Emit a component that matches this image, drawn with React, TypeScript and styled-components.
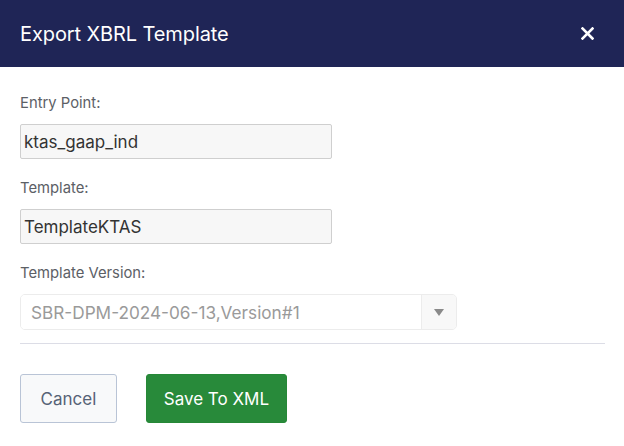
import React from "react";
import styled, { createGlobalStyle } from "styled-components";

const Global = createGlobalStyle`
  html, body { margin: 0; padding: 0; background: #ffffff; }
  body { font-family: Inter, "Noto Sans", sans-serif; }
  * { box-sizing: border-box; }
`;

const Dialog = styled.div`
  width: 624px;
  height: 446px;
  background: #ffffff;
  display: flex;
  flex-direction: column;
`;

const Header = styled.div`
  height: 67px;
  background: #1f2556;
  display: flex;
  align-items: center;
  justify-content: space-between;
  padding: 0 29px 0 20px;
`;

const Title = styled.h2`
  margin: 0;
  font-size: 20px;
  font-weight: 400;
  color: #ffffff;
  letter-spacing: -0.1px;
`;

const CloseButton = styled.button`
  border: 0;
  background: transparent;
  padding: 0;
  width: 16px;
  height: 16px;
  display: flex;
  align-items: center;
  justify-content: center;
  cursor: pointer;
`;

const Body = styled.div`
  padding: 26px 20px 0 20px;
  display: flex;
  flex-direction: column;
`;

const Field = styled.div<{ $last?: boolean }>`
  display: flex;
  flex-direction: column;
  margin-bottom: ${(p) => (p.$last ? "0" : "19px")};
`;

const Label = styled.label`
  font-size: 14.8px;
  line-height: 20px;
  color: #5c6066;
  margin-bottom: 11px;
`;

const TextInput = styled.input`
  width: 312px;
  height: 35px;
  border: 1px solid #cfcfcf;
  border-radius: 2px;
  background: #f7f7f7;
  padding: 0 3px;
  font-family: Inter, "Noto Sans", sans-serif;
  font-size: 17px;
  color: #333333;
  outline: none;
`;

const Select = styled.div`
  width: 437px;
  height: 36px;
  border: 1px solid #ececec;
  border-radius: 5px;
  display: flex;
  align-items: stretch;
  overflow: hidden;
`;

const SelectValue = styled.div`
  flex: 1;
  display: flex;
  align-items: center;
  padding-left: 10px;
  font-size: 17.2px;
  color: #9a9a9a;
  background: #ffffff;
`;

const SelectArrow = styled.div`
  width: 35px;
  border-left: 1px solid #ececec;
  background: #f8f8f8;
  display: flex;
  align-items: center;
  justify-content: center;
`;

const Divider = styled.hr`
  margin: 13px 0 0 0;
  border: 0;
  border-top: 1px solid #dcdde6;
  width: 585px;
`;

const Footer = styled.div`
  display: flex;
  gap: 29px;
  padding: 30px 20px 0 20px;
`;

const Button = styled.button<{ $primary?: boolean }>`
  height: 49px;
  padding: 0 ${(p) => (p.$primary ? "17px" : "19.5px")};
  border-radius: 3px;
  font-family: Inter, "Noto Sans", sans-serif;
  font-size: 17px;
  cursor: pointer;
  border: 1px solid ${(p) => (p.$primary ? "#268837" : "#b9c4d6")};
  background: ${(p) => (p.$primary ? "#288a3a" : "#f8f9fa")};
  color: ${(p) => (p.$primary ? "#ffffff" : "#566276")};
`;

export default function App() {
  return (
    <>
      <Global />
      <Dialog>
        <Header>
          <Title>Export XBRL Template</Title>
          <CloseButton aria-label="Close">
            <svg width="13" height="13" viewBox="0 0 13 13">
              <path d="M1.5 1.5 L11.5 11.5 M11.5 1.5 L1.5 11.5" stroke="#ffffff" strokeWidth="2.6" strokeLinecap="square" />
            </svg>
          </CloseButton>
        </Header>
        <Body>
          <Field>
            <Label>Entry Point:</Label>
            <TextInput readOnly value="ktas_gaap_ind" />
          </Field>
          <Field>
            <Label>Template:</Label>
            <TextInput readOnly value="TemplateKTAS" />
          </Field>
          <Field $last>
            <Label>Template Version:</Label>
            <Select>
              <SelectValue>SBR-DPM-2024-06-13,Version#1</SelectValue>
              <SelectArrow>
                <svg width="10" height="7" viewBox="0 0 10 7">
                  <path d="M0 0 H10 L5 7 Z" fill="#8a8a8a" />
                </svg>
              </SelectArrow>
            </Select>
          </Field>
          <Divider />
        </Body>
        <Footer>
          <Button>Cancel</Button>
          <Button $primary>Save To XML</Button>
        </Footer>
      </Dialog>
    </>
  );
}
